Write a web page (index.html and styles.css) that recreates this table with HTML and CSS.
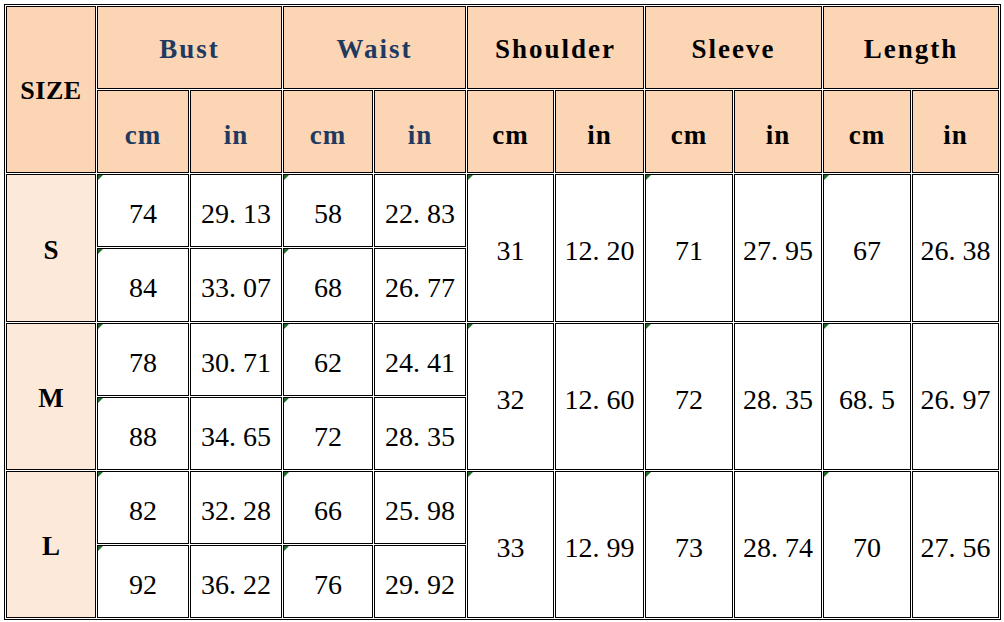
FILE: index.html
```html
<!DOCTYPE html>
<html>
<head>
<meta charset="utf-8">
<link rel="stylesheet" href="styles.css">
</head>
<body>
<div class="sheet">
<table class="chart">
  <colgroup>
    <col style="width:90px"><col style="width:92px"><col style="width:92px"><col style="width:90px"><col style="width:92px"><col style="width:87px"><col style="width:89px"><col style="width:88px"><col style="width:88px"><col style="width:88px"><col style="width:87px">
  </colgroup>
  <tr class="hrow">
    <th rowspan="2" class="head sizehead">SIZE</th>
    <th colspan="2" class="head navy">Bust</th>
    <th colspan="2" class="head navy">Waist</th>
    <th colspan="2" class="head">Shoulder</th>
    <th colspan="2" class="head">Sleeve</th>
    <th colspan="2" class="head">Length</th>
  </tr>
  <tr class="hrow">
    <th class="head unit navy">cm</th><th class="head unit navy">in</th>
    <th class="head unit navy">cm</th><th class="head unit navy">in</th>
    <th class="head unit">cm</th><th class="head unit">in</th>
    <th class="head unit">cm</th><th class="head unit">in</th>
    <th class="head unit">cm</th><th class="head unit">in</th>
  </tr>
  <tr class="r73">
    <th rowspan="2" class="size">S</th>
    <td class="num flag">74</td><td class="num">29<span class="dot">.</span>13</td>
    <td class="num flag">58</td><td class="num">22<span class="dot">.</span>83</td>
    <td rowspan="2" class="num flag">31</td><td rowspan="2" class="num">12<span class="dot">.</span>20</td>
    <td rowspan="2" class="num flag">71</td><td rowspan="2" class="num">27<span class="dot">.</span>95</td>
    <td rowspan="2" class="num flag">67</td><td rowspan="2" class="num">26<span class="dot">.</span>38</td>
  </tr>
  <tr class="r74">
    <td class="num flag">84</td><td class="num">33<span class="dot">.</span>07</td>
    <td class="num flag">68</td><td class="num">26<span class="dot">.</span>77</td>
  </tr>
  <tr class="r73">
    <th rowspan="2" class="size">M</th>
    <td class="num flag">78</td><td class="num">30<span class="dot">.</span>71</td>
    <td class="num flag">62</td><td class="num">24<span class="dot">.</span>41</td>
    <td rowspan="2" class="num flag">32</td><td rowspan="2" class="num">12<span class="dot">.</span>60</td>
    <td rowspan="2" class="num flag">72</td><td rowspan="2" class="num">28<span class="dot">.</span>35</td>
    <td rowspan="2" class="num flag">68<span class="dot">.</span>5</td><td rowspan="2" class="num">26<span class="dot">.</span>97</td>
  </tr>
  <tr class="r73">
    <td class="num flag">88</td><td class="num">34<span class="dot">.</span>65</td>
    <td class="num flag">72</td><td class="num">28<span class="dot">.</span>35</td>
  </tr>
  <tr class="r73">
    <th rowspan="2" class="size">L</th>
    <td class="num flag">82</td><td class="num">32<span class="dot">.</span>28</td>
    <td class="num flag">66</td><td class="num">25<span class="dot">.</span>98</td>
    <td rowspan="2" class="num flag">33</td><td rowspan="2" class="num">12<span class="dot">.</span>99</td>
    <td rowspan="2" class="num flag">73</td><td rowspan="2" class="num">28<span class="dot">.</span>74</td>
    <td rowspan="2" class="num flag">70</td><td rowspan="2" class="num">27<span class="dot">.</span>56</td>
  </tr>
  <tr class="r73">
    <td class="num flag">92</td><td class="num">36<span class="dot">.</span>22</td>
    <td class="num flag">76</td><td class="num">29<span class="dot">.</span>92</td>
  </tr>
</table>
</div>
</body>
</html>
```

FILE: styles.css
```css
html, body {
  margin: 0;
  padding: 0;
  background: #ffffff;
}

.sheet {
  padding: 4px 0 0 4px;
}

.chart {
  table-layout: fixed;
  width: 997px;
  border-collapse: separate;
  border-spacing: 1px;
  border: 1px solid #000;
  background: #ffffff;
}

:where(.chart) th,
:where(.chart) td {
  border: 1px solid #000;
  padding: 0;
  text-align: center;
  vertical-align: middle;
  box-sizing: border-box;
}

.hrow { height: 83px; }
.r73 { height: 73px; }
.r74 { height: 74px; }

.head {
  background: #fcd5b4;
  color: #000;
  font-family: "Liberation Serif", "Times New Roman", serif;
  font-weight: bold;
  font-size: 27px;
  letter-spacing: 2px;
  padding-top: 3px;
}

.sizehead {
  font-size: 26px;
  letter-spacing: 0.5px;
  padding-top: 2px;
}

.unit {
  letter-spacing: 1px;
  padding-top: 8px;
}

.navy { color: #1f3a60; }

.size {
  background: #fde9d9;
  color: #000;
  font-family: "Liberation Serif", "Times New Roman", serif;
  font-weight: bold;
  font-size: 27px;
  padding-top: 4px;
}

.num {
  position: relative;
  font-family: "Liberation Serif", "Times New Roman", serif;
  font-weight: normal;
  font-size: 28px;
  color: #000;
  padding-top: 6px;
}

.dot { padding-right: 0.25em; }

.flag::before {
  content: "";
  position: absolute;
  left: 0;
  top: 0;
  width: 0;
  height: 0;
  border-top: 5px solid #1f6b2a;
  border-right: 5px solid transparent;
}
```
